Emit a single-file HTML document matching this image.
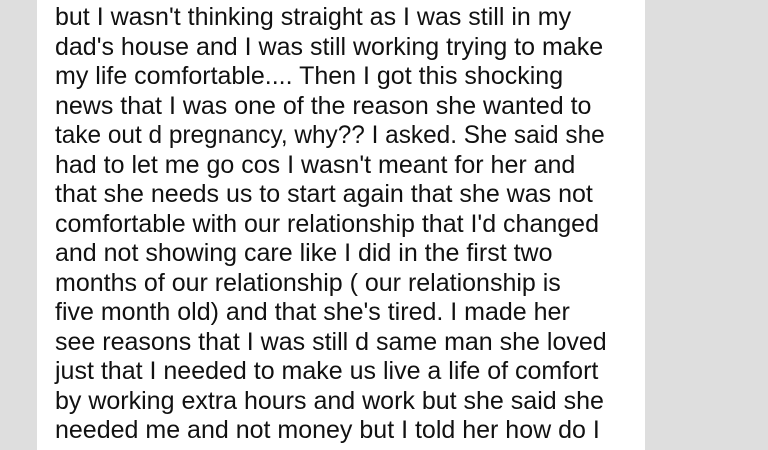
<!DOCTYPE html>
<html><head><meta charset="utf-8"><style>
html,body{margin:0;padding:0;width:768px;height:450px;overflow:hidden;background:#dedede;}
.card{position:absolute;left:37px;top:0;width:608px;height:450px;background:#fff;}
.t{position:absolute;left:18px;top:3px;font-family:"Liberation Sans",sans-serif;font-size:25px;line-height:29.5px;color:#111;white-space:nowrap;}
.t div{height:29.5px;transform-origin:0 50%;}
</style></head><body>
<div class="card"><div class="t">
<div>but I wasn't thinking straight as I was still in my</div>
<div>dad's house and I was still working trying to make</div>
<div>my life comfortable.... Then I got this shocking</div>
<div>news that I was one of the reason she wanted to</div>
<div style="transform:scaleX(0.975)">take out d pregnancy, why?? I asked. She said she</div>
<div>had to let me go cos I wasn't meant for her and</div>
<div>that she needs us to start again that she was not</div>
<div>comfortable with our relationship that I'd changed</div>
<div>and not showing care like I did in the first two</div>
<div>months of our relationship ( our relationship is</div>
<div>five month old) and that she's tired. I made her</div>
<div>see reasons that I was still d same man she loved</div>
<div>just that I needed to make us live a life of comfort</div>
<div>by working extra hours and work but she said she</div>
<div>needed me and not money but I told her how do I</div>
</div></div>
</body></html>
